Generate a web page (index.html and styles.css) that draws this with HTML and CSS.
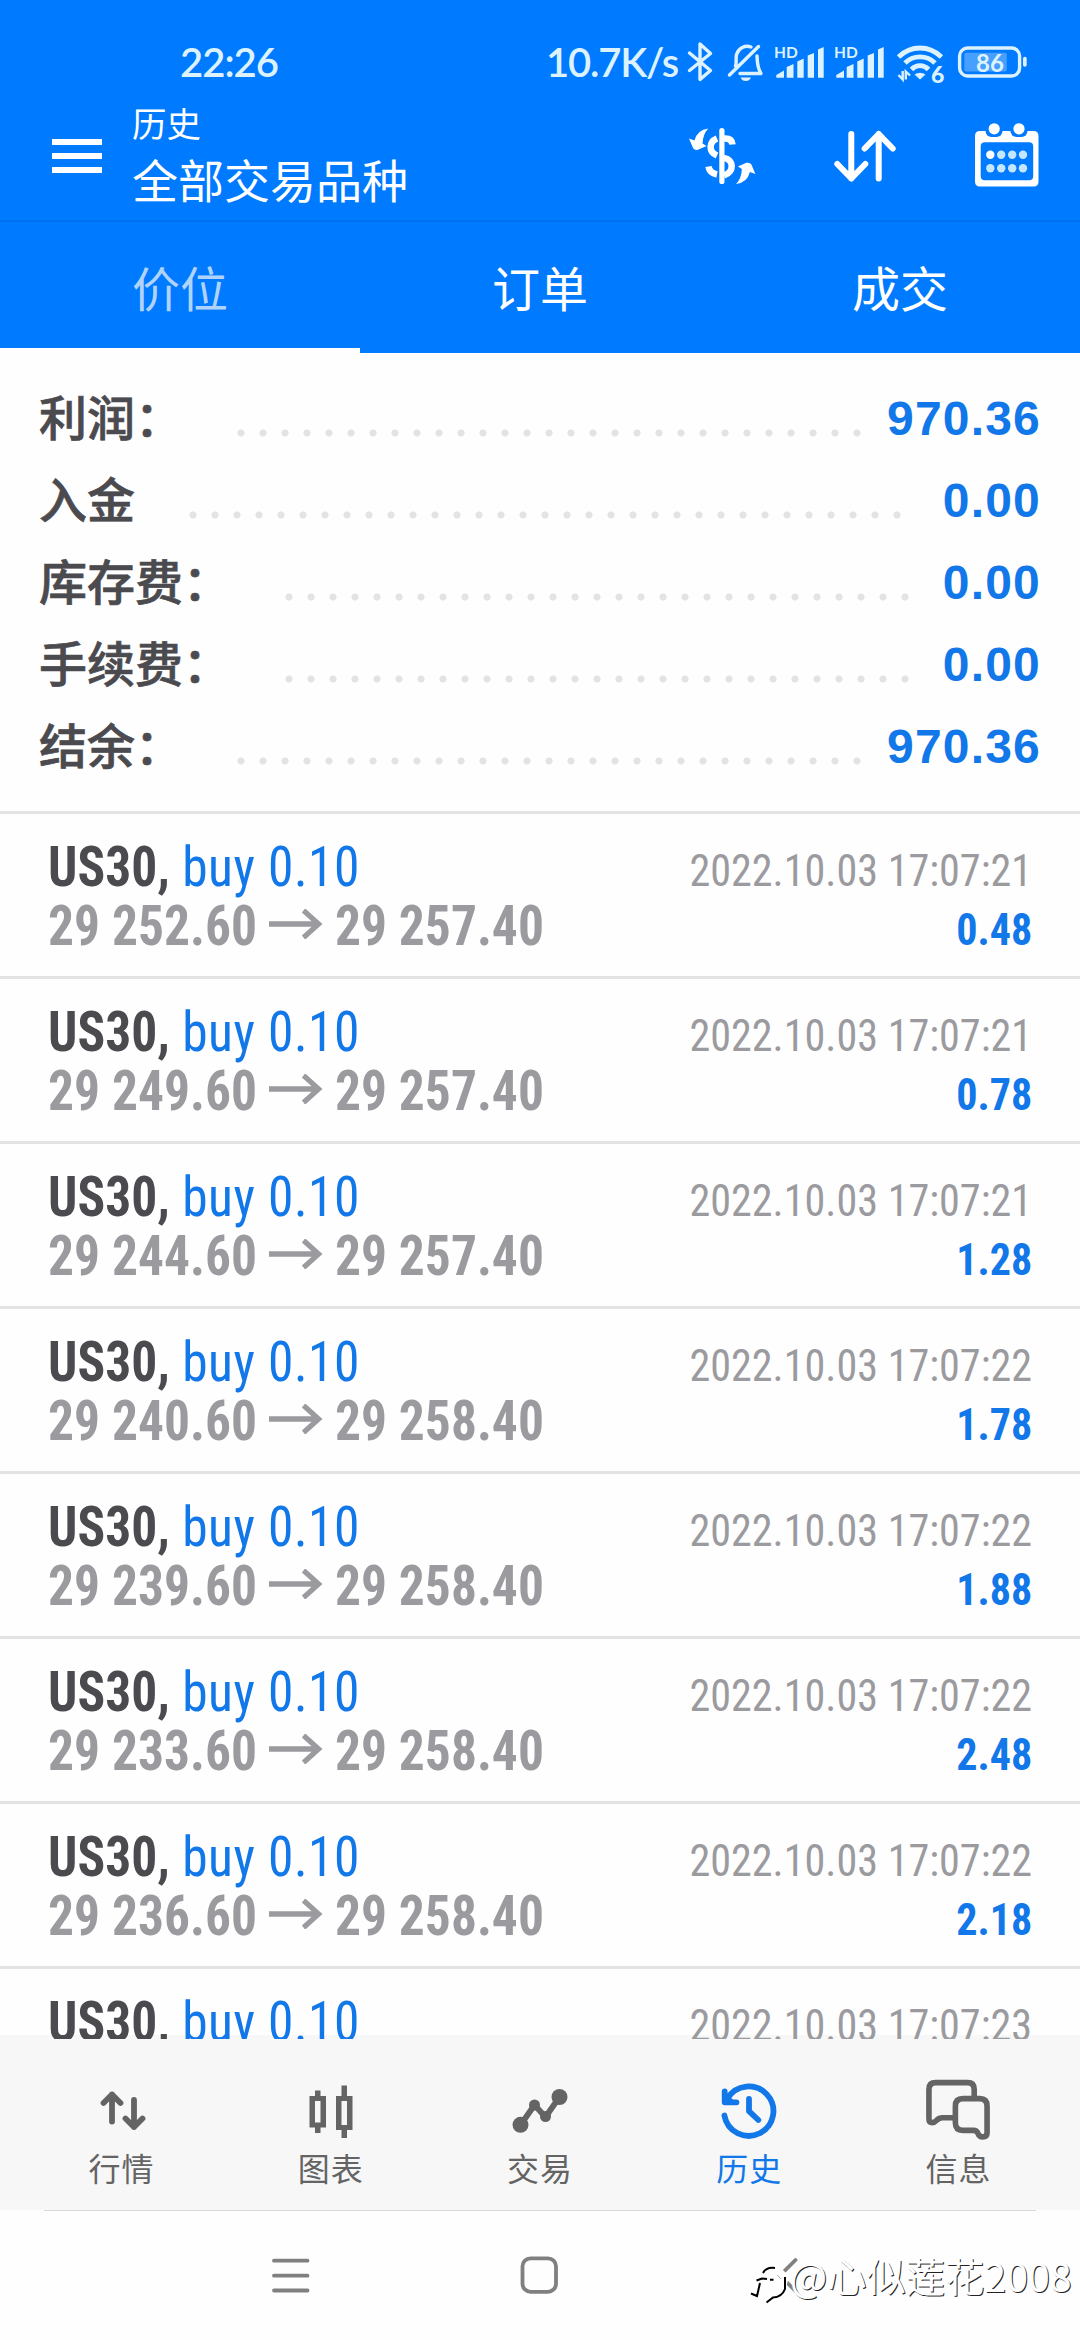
FILE: index.html
```html
<!DOCTYPE html>
<html lang="zh-CN">
<head>
<meta charset="utf-8">
<title>历史</title>
<link rel="stylesheet" href="styles.css">
</head>
<body>
<div class="screen">
  <header class="top">
    <div class="status">
      <span class="clock">22:26</span>
      <span class="speed">10.7K/s</span>
      <svg class="st-icons" viewBox="684 38 346 48" width="346" height="48">
        <path class="st-line" d="M689.5 53 710.5 70.5 700 79.5V44L710.5 53.500 689.5 70.5"/>
        <path class="st-line" d="M729.5 75 758.500 46.500M735.500 66C737 62 735.500 58 736.500 54.500C738.500 48 745 44.800 751 47M757 56C757.500 62 757 67 761 73.500H740"/>
        <path class="st-fill" d="M740.500 77.500H751Q749.500 81 745.800 81T740.500 77.500Z"/>
        <g id="sim">
          <text class="hd" x="774" y="57.700">HD</text>
          <path class="st-fill" d="M776.300 77.700V75L784 70.500V77.700ZM786.700 77.700V67L793.500 64V77.700ZM797.300 77.700V61.500L803.700 58.500V77.700ZM807.700 77.700V55.500L814 53V77.700ZM818 77.700V49.500L823.700 47V77.700Z"/>
        </g>
        <use href="#sim" x="60"/>
        <path class="wifi" d="M898.500 57Q908 48 920 48T941.500 57M905 63Q911 56.800 920 56.800T935 63M911.500 69.500Q915 65.700 920 65.700T928.500 69.500"/>
        <path class="st-fill" d="M914.500 74.500Q920 71 925.500 74.500L920 79.500Z"/>
        <path class="tiny" d="M898.500 75 902.700 79.500V71M910 75.500 905.800 71.500V79.500"/>
        <text class="six" x="931" y="82.700">6</text>
        <rect class="st-line" x="959.600" y="48" width="60" height="28" rx="8"/>
        <rect class="charge" x="964.300" y="52.700" width="42.500" height="18.700" rx="2"/>
        <rect class="st-fill" x="1023" y="56.700" width="3.700" height="10" rx="1.800"/>
        <text class="pct" x="990" y="71.500" text-anchor="middle">86</text>
      </svg>
    </div>
    <div class="appbar">
      <div class="burger"><i></i><i></i><i></i></div>
      <div class="titles">
        <div class="t-small">历史</div>
        <div class="t-big">全部交易品种</div>
      </div>
      <svg class="act currency" viewBox="688 122 68 68" width="68" height="68">
        <rect x="719.300" y="128" width="5.200" height="56" rx="2.600"/>
        <path class="stroke7" d="M717 138.500C708.500 142 708.500 152 717 155.500M724 138.500Q732 138 732.500 144.500M724 158C733.500 159 735 172 724 175.500M717 174.500Q709.500 173 708.500 166.500"/>
        <path id="swap" d="M708.300 128.500Q697 130 694.500 140.500L689 138.500 693 148Q694.500 150.500 698 149.800L706.500 146 702.500 143.500Q703 134 708.300 128.500Z"/>
        <use href="#swap" transform="rotate(180 722.200 156.300)"/>
      </svg>
      <svg class="act sort" viewBox="833 127 64 58" width="64" height="58">
        <path class="stroke6" d="M851.300 134V178.500M837.300 164 851.300 178.500 865.300 164M878.700 178.500V134M864.700 148.500 878.700 134 892.700 148.500"/>
      </svg>
      <svg class="act cal" viewBox="974 121 66 68" width="66" height="68">
        <path fill-rule="evenodd" d="M980 131H1033.500Q1038.500 131 1038.500 136V181.500Q1038.500 186.500 1033.500 186.500H980Q975 186.500 975 181.500V136Q975 131 980 131ZM985 142.300Q980.700 142.300 980.700 146.500V176Q980.700 180.300 985 180.300H1029Q1033.200 180.300 1033.200 176V146.500Q1033.200 142.300 1029 142.300Z"/>
        <g class="notch"><rect x="985.500" y="120" width="17" height="17" rx="6"/><rect x="1010.500" y="120" width="17" height="17" rx="6"/></g>
        <circle cx="994.200" cy="128.800" r="5.600"/><circle cx="1019" cy="128.800" r="5.600"/>
        <circle cx="990.300" cy="154.700" r="4.200"/>
        <g class="dim"><circle cx="1001.200" cy="154.700" r="4.200"/><circle cx="1012.200" cy="154.700" r="4.200"/><circle cx="1023" cy="154.700" r="4.200"/><circle cx="990.300" cy="168.300" r="4.200"/><circle cx="1001.200" cy="168.300" r="4.200"/><circle cx="1012.200" cy="168.300" r="4.200"/><circle cx="1023" cy="168.300" r="4.200"/></g>
      </svg>
    </div>
    <nav class="tabs">
      <a class="tab active">价位</a><a class="tab">订单</a><a class="tab">成交</a>
    </nav>
  </header>

  <main class="content">
    <section class="summary">
      <div class="sum"><span class="label">利润：</span><span class="dots" style="width:638px"></span><span class="num">970.36</span></div>
      <div class="sum"><span class="label">入金</span><span class="dots" style="width:726px"></span><span class="num">0.00</span></div>
      <div class="sum"><span class="label">库存费：</span><span class="dots" style="width:638px"></span><span class="num">0.00</span></div>
      <div class="sum"><span class="label">手续费：</span><span class="dots" style="width:638px"></span><span class="num">0.00</span></div>
      <div class="sum"><span class="label">结余：</span><span class="dots" style="width:638px"></span><span class="num">970.36</span></div>
    </section>
    <section class="deals">
      <article class="deal"><div class="line"><span class="sym"><b>US30,</b> buy 0.10</span><span class="time">2022.10.03 17:07:21</span></div><div class="line"><span class="price">29 252.60 <svg class="arrow" viewBox="0 0 58 30"><path d="M0 15H54M37 1.500 53 15 37 28.500"/></svg> 29 257.40</span><span class="profit">0.48</span></div></article>
      <article class="deal"><div class="line"><span class="sym"><b>US30,</b> buy 0.10</span><span class="time">2022.10.03 17:07:21</span></div><div class="line"><span class="price">29 249.60 <svg class="arrow" viewBox="0 0 58 30"><path d="M0 15H54M37 1.500 53 15 37 28.500"/></svg> 29 257.40</span><span class="profit">0.78</span></div></article>
      <article class="deal"><div class="line"><span class="sym"><b>US30,</b> buy 0.10</span><span class="time">2022.10.03 17:07:21</span></div><div class="line"><span class="price">29 244.60 <svg class="arrow" viewBox="0 0 58 30"><path d="M0 15H54M37 1.500 53 15 37 28.500"/></svg> 29 257.40</span><span class="profit">1.28</span></div></article>
      <article class="deal"><div class="line"><span class="sym"><b>US30,</b> buy 0.10</span><span class="time">2022.10.03 17:07:22</span></div><div class="line"><span class="price">29 240.60 <svg class="arrow" viewBox="0 0 58 30"><path d="M0 15H54M37 1.500 53 15 37 28.500"/></svg> 29 258.40</span><span class="profit">1.78</span></div></article>
      <article class="deal"><div class="line"><span class="sym"><b>US30,</b> buy 0.10</span><span class="time">2022.10.03 17:07:22</span></div><div class="line"><span class="price">29 239.60 <svg class="arrow" viewBox="0 0 58 30"><path d="M0 15H54M37 1.500 53 15 37 28.500"/></svg> 29 258.40</span><span class="profit">1.88</span></div></article>
      <article class="deal"><div class="line"><span class="sym"><b>US30,</b> buy 0.10</span><span class="time">2022.10.03 17:07:22</span></div><div class="line"><span class="price">29 233.60 <svg class="arrow" viewBox="0 0 58 30"><path d="M0 15H54M37 1.500 53 15 37 28.500"/></svg> 29 258.40</span><span class="profit">2.48</span></div></article>
      <article class="deal"><div class="line"><span class="sym"><b>US30,</b> buy 0.10</span><span class="time">2022.10.03 17:07:22</span></div><div class="line"><span class="price">29 236.60 <svg class="arrow" viewBox="0 0 58 30"><path d="M0 15H54M37 1.500 53 15 37 28.500"/></svg> 29 258.40</span><span class="profit">2.18</span></div></article>
      <article class="deal"><div class="line"><span class="sym"><b>US30,</b> buy 0.10</span><span class="time">2022.10.03 17:07:23</span></div></article>
    </section>
  </main>

  <nav class="bottom">
    <a class="item">
      <svg viewBox="86 2080 70 60" width="70" height="60"><path class="n-line" d="M111 2121.500V2094.500M102.500 2103 111 2094.500 119.500 2103M133 2100V2127M124.500 2118.500 133 2127 141.500 2118.500"/></svg>
      <span>行情</span>
    </a>
    <a class="item">
      <svg viewBox="296 2080 70 60" width="70" height="60"><path fill-rule="evenodd" d="M315 2090.500H320.500V2096H326V2127.500H320.500V2133H315V2127.500H309.500V2096H315ZM315 2101V2122.500H320.500V2101ZM341.500 2085.500H347V2096H352.500V2130H347V2138H341.500V2130H336V2096H341.500ZM341.500 2101V2125H347V2101Z"/></svg>
      <span>图表</span>
    </a>
    <a class="item">
      <svg viewBox="505 2080 70 60" width="70" height="60"><path class="n-line" d="M520.500 2125 534.500 2105 545.500 2117 559.500 2097"/><circle cx="520.500" cy="2124.800" r="8"/><circle cx="534.500" cy="2105" r="5.500"/><circle cx="545.500" cy="2116.500" r="5.500"/><circle cx="559.500" cy="2097" r="8"/></svg>
      <span>交易</span>
    </a>
    <a class="item on">
      <svg viewBox="714 2080 70 60" width="70" height="60"><path class="n-line" d="M724.400 2115.500A24.700 24.700 0 1 0 727.500 2098.500M724.700 2091.500V2102.300H736.500M749 2099V2111.200L758.300 2120"/><path d="M724 2092 737 2103H724Z"/></svg>
      <span>历史</span>
    </a>
    <a class="item">
      <svg viewBox="923 2079 70 64" width="70" height="64"><path class="n-line" d="M974.700 2097V2089.500Q974.700 2082.700 968 2082.700H935Q928 2082.700 928 2089.500V2120Q928 2124 931.500 2124Q933.500 2124 936 2121.500Q938.500 2119 942 2119H953M963 2099.300H980.500Q988 2099.300 988 2107V2134.500Q988 2138.800 983.500 2138.800Q980 2138.800 978.800 2135.500Q977.500 2132 974 2132H963Q955.300 2132 955.300 2124.500V2107Q955.300 2099.300 963 2099.300Z"/></svg>
      <span>信息</span>
    </a>
  </nav>

  <footer class="sys">
    <svg viewBox="270 2255 42 40" width="42" height="40"><path d="M274 2260.700H307.500M274 2275.700H307.500M274 2290.500H307.500"/></svg>
    <svg class="home" viewBox="519 2255 42 40" width="42" height="40"><rect x="522.500" y="2258.300" width="33.500" height="33.500" rx="8"/></svg>
    <svg viewBox="777 2255 42 40" width="42" height="40"><path d="M795.500 2260 780 2275.500 795.500 2291"/></svg>
    <div class="mark">
      <svg viewBox="748 2262 42 44" width="42" height="44">
        <path class="mark-body" d="M754 2292 760 2277 776 2268 785 2278 781 2293 769 2298M778 2270 788 2280"/>
        <path class="mark-edge" d="M763 2273Q766 2267 775 2268M756.500 2280.500 762 2278.500 767 2279M770 2279.700H773.500M760 2283 757 2296 751 2293.500M785 2277V2289Q782 2297 773 2297.500L766.500 2302.500"/>
      </svg>
      <span>@心似莲花2008</span>
    </div>
  </footer>
</div>
</body>
</html>
```
FILE: styles.css
```css
* { box-sizing: border-box; }
body { margin: 0; font-family: Roboto, "Noto Sans CJK SC", sans-serif; background: #fff; }
.screen { width: 1080px; height: 2340px; display: flex; flex-direction: column; overflow: hidden; background: #fefefe; }

.top { height: 353px; background: #007aff; color: #fff; flex: none; display: flex; flex-direction: column; }
.status { height: 100px; padding: 24px 50px 0 180px; display: flex; align-items: center; color: #dcf3ff; font: 600 40px/76px Lato, sans-serif; }
.clock, .speed { height: 76px; letter-spacing: -1px; }
.speed { margin-left: auto; letter-spacing: -1.2px; }
.st-icons { margin: 0 0 14px 6px; align-self: flex-end; height: 48px; flex: none; overflow: visible; }
.st-line { fill: none; stroke: #dcf3ff; stroke-width: 3.4; stroke-linecap: round; stroke-linejoin: round; }
.wifi { fill: none; stroke: #dcf3ff; stroke-width: 4.8; }
.tiny { fill: none; stroke: #dcf3ff; stroke-width: 2.4; }
.st-fill { fill: #dcf3ff; }
.charge { fill: #fff; opacity: .28; }
.hd { font: 700 15.5px Lato, sans-serif; fill: #dcf3ff; }
.six { font: 900 23px Lato, sans-serif; fill: #dcf3ff; }
.pct { font: 700 24px Lato, sans-serif; fill: #dcf3ff; }

.appbar { height: 122px; padding-left: 52px; display: flex; border-bottom: 2px solid #0070ee; }
.burger { width: 50px; padding-top: 39px; display: flex; flex-direction: column; gap: 8.3px; }
.burger i { height: 5.7px; background: #fff; }
.titles { margin: -2px auto 0 30px; font-family: "Noto Sans CJK SC", sans-serif; }
.t-small { font-size: 34.5px; line-height: 49px; }
.t-big { font-size: 46px; line-height: 63px; }
.act { fill: #fff; flex: none; }
.currency { margin-top: 22px; }
.sort { margin: 27px 0 0 77px; }
.cal { margin: 21px 40px 0 77px; }
.stroke7 { fill: none; stroke: #fff; stroke-width: 6.5; }
.stroke6 { fill: none; stroke: #fff; stroke-width: 6; stroke-linecap: round; stroke-linejoin: round; }
.notch { fill: #007aff; }
.dim { fill: #c4e6ff; }

.tabs { flex: 1; display: grid; grid-template-columns: repeat(3, 1fr); }
.tab { font: 400 48px/128px "Noto Sans CJK SC", sans-serif; text-align: center; height: 131px; }
.tab.active { color: #b0d3fb; border-bottom: 5px solid #fff; }

.content { height: 1686px; flex: none; overflow: hidden; background: linear-gradient(#fefefe 1682px, #f7f7f7 1682px); }
.summary { height: 461px; padding: 23px 40px 0; border-bottom: 3px solid #e3e3e3; }
.sum { height: 82px; display: flex; align-items: center; }
.label { font: 500 48px/82px "Noto Sans CJK SC", sans-serif; color: #4a4a4f; white-space: nowrap; margin: -5px 1px 0 -1px; -webkit-text-stroke: .7px #4a4a4f; }
.dots { margin-left: 45.5px; height: 8px; margin-top: 31px; background: radial-gradient(circle at center, #e3e3e3 3.2px, transparent 3.9px) 0 0 / 22px 8px repeat-x; }
.num { margin-left: auto; font: 700 48px/82px "Liberation Sans", sans-serif; letter-spacing: 1.2px; color: #1277e8; margin-right: -1px; padding-top: 4px; }

.deal { height: 165px; padding: 24px 48px 0; border-bottom: 3px solid #e3e3e3; font-family: "Roboto Condensed", Roboto, sans-serif; }
.line { height: 59px; display: flex; justify-content: space-between; align-items: baseline; line-height: 59px; white-space: nowrap; }
.sym, .price { font-size: 55px; transform: scaleX(.936); transform-origin: 0 50%; }
.sym { color: #1277e8; letter-spacing: .6px; font-weight: 450; }
.sym b { color: #4a4a4f; letter-spacing: 0; font-weight: 700; }
.price { font-weight: 700; color: #9b9b9f; }
.arrow { width: 58px; height: 30px; fill: none; stroke: #9b9b9f; stroke-width: 5.5; vertical-align: 6px; }
.time, .profit { font-size: 45px; transform: scaleX(.936); transform-origin: 100% 50%; }
.time { color: #9b9b9f; }
.profit { font-weight: 700; color: #1277e8; }

.bottom { height: 171px; flex: none; padding: 40px 17px 0; display: grid; grid-template-columns: repeat(5, 1fr); background: #f7f7f7; color: #646464; }
.item { display: flex; flex-direction: column; align-items: center; fill: currentColor; }
.item svg { height: 62px; }
.item span { font: 400 32px/46px "Noto Sans CJK SC", sans-serif; letter-spacing: 1px; margin-top: 3px; }
.item.on { color: #1277e8; }
.n-line { fill: none; stroke: currentColor; stroke-width: 5.8; stroke-linecap: round; stroke-linejoin: round; }

.sys { position: relative; flex: 1; padding: 45px 261px 0 270px; display: flex; justify-content: space-between; background: linear-gradient(#d9d9d9, #d9d9d9) 44px 0 / 992px 1px no-repeat; }
.sys > svg { fill: none; stroke: #808080; stroke-width: 3.8; stroke-linecap: round; }
.sys > .home { margin-left: -9px; }
.mark { position: absolute; left: 748px; top: 38px; display: flex; color: #fff; font: 400 39.3px/54px "Noto Sans CJK SC", sans-serif; white-space: nowrap; text-shadow: 1px 1px 0 #222; }
.mark svg { margin-top: 14px; fill: none; }
.mark-body { stroke: #fff; stroke-width: 7; }
.mark-edge { stroke: #000; stroke-width: 2; }
```
